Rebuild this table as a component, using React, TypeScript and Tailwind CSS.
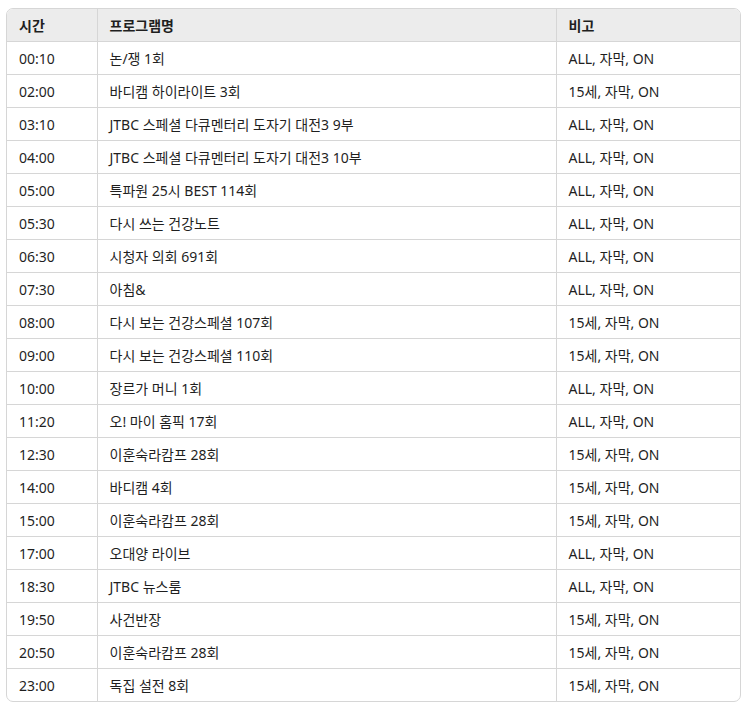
const rows: [string, string, string][] = [
  ["00:10", "논/쟁 1회", "ALL, 자막, ON"],
  ["02:00", "바디캠 하이라이트 3회", "15세, 자막, ON"],
  ["03:10", "JTBC 스페셜 다큐멘터리 도자기 대전3 9부", "ALL, 자막, ON"],
  ["04:00", "JTBC 스페셜 다큐멘터리 도자기 대전3 10부", "ALL, 자막, ON"],
  ["05:00", "특파원 25시 BEST 114회", "ALL, 자막, ON"],
  ["05:30", "다시 쓰는 건강노트", "ALL, 자막, ON"],
  ["06:30", "시청자 의회 691회", "ALL, 자막, ON"],
  ["07:30", "아침&", "ALL, 자막, ON"],
  ["08:00", "다시 보는 건강스페셜 107회", "15세, 자막, ON"],
  ["09:00", "다시 보는 건강스페셜 110회", "15세, 자막, ON"],
  ["10:00", "장르가 머니 1회", "ALL, 자막, ON"],
  ["11:20", "오! 마이 홈픽 17회", "ALL, 자막, ON"],
  ["12:30", "이훈숙라캄프 28회", "15세, 자막, ON"],
  ["14:00", "바디캠 4회", "15세, 자막, ON"],
  ["15:00", "이훈숙라캄프 28회", "15세, 자막, ON"],
  ["17:00", "오대양 라이브", "ALL, 자막, ON"],
  ["18:30", "JTBC 뉴스룸", "ALL, 자막, ON"],
  ["19:50", "사건반장", "15세, 자막, ON"],
  ["20:50", "이훈숙라캄프 28회", "15세, 자막, ON"],
  ["23:00", "독집 설전 8회", "15세, 자막, ON"],
];

export default function App() {
  return (
    <div className="bg-white pl-[6px] pt-[8px] font-['Noto_Sans','Noto_Sans_CJK_KR',sans-serif] text-[14px] text-[#1f1f1f]">
      <div className="w-[735px] overflow-hidden rounded-[7px] border border-[#d6d6d6]">
        <table className="w-full table-fixed border-collapse">
          <colgroup>
            <col className="w-[90px]" />
            <col className="w-[459px]" />
            <col />
          </colgroup>
          <thead>
            <tr className="h-[32px] bg-[#ececec]">
              <th className="px-3 pt-[2px] text-left font-semibold">시간</th>
              <th className="border-l border-[#d6d6d6] px-3 pt-[2px] text-left font-semibold">프로그램명</th>
              <th className="border-l border-[#d6d6d6] px-3 pt-[2px] text-left font-semibold">비고</th>
            </tr>
          </thead>
          <tbody>
            {rows.map(([time, name, note]) => (
              <tr key={time} className="h-[33px] border-t border-[#d6d6d6]">
                <td className="px-3 pt-[2px]">{time}</td>
                <td className="border-l border-[#d6d6d6] px-3 pt-[2px]">{name}</td>
                <td className="border-l border-[#d6d6d6] px-3 pt-[2px]">{note}</td>
              </tr>
            ))}
          </tbody>
        </table>
      </div>
    </div>
  );
}
